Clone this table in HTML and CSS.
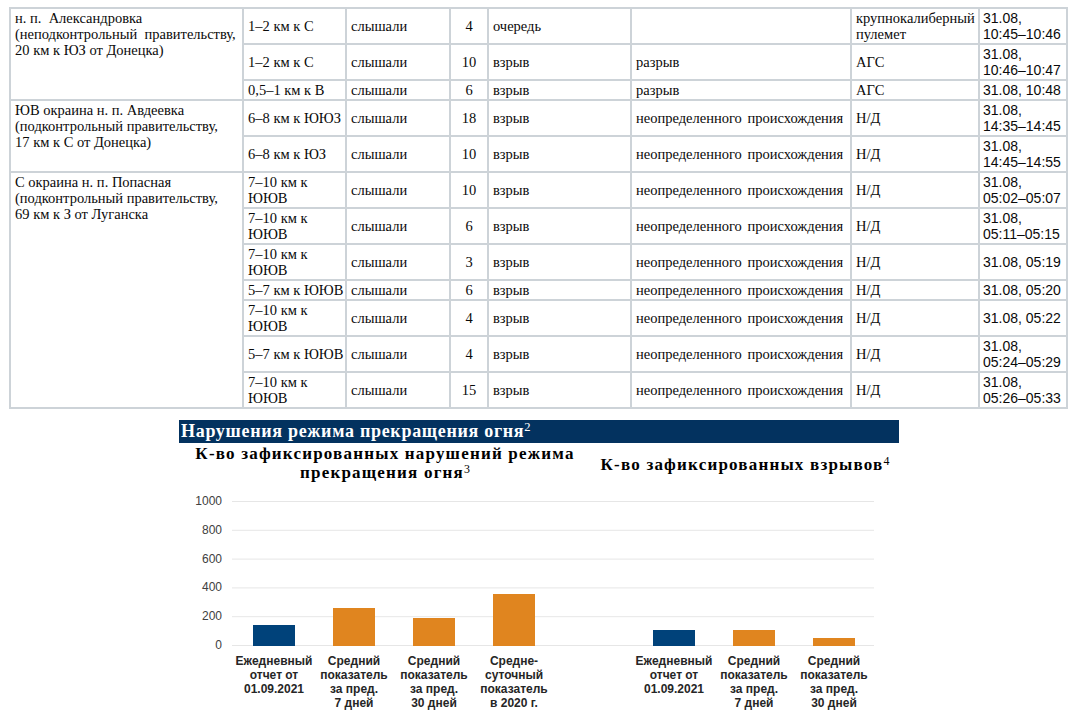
FILE: index.html
```html
<!DOCTYPE html>
<html lang="ru">
<head>
<meta charset="utf-8">
<title>Отчет</title>
<link rel="stylesheet" href="styles.css">
</head>
<body>
<table class="log">
  <colgroup>
    <col class="c1"><col class="c2"><col class="c3"><col class="c4"><col class="c5"><col class="c6"><col class="c7"><col class="c8">
  </colgroup>
  <tbody>
    <tr>
      <td class="place" rowspan="3">н. п. &nbsp;Александровка<br>(неподконтрольный &nbsp;правительству,<br>20 км к ЮЗ от Донецка)</td>
      <td class="dist">1–2 км к С</td><td>слышали</td><td class="num">4</td><td>очередь</td><td></td><td>крупнокалиберный пулемет</td><td class="date">31.08,<br>10:45–10:46</td>
    </tr>
    <tr>
      <td class="dist">1–2 км к С</td><td>слышали</td><td class="num">10</td><td>взрыв</td><td>разрыв</td><td>АГС</td><td class="date">31.08,<br>10:46–10:47</td>
    </tr>
    <tr>
      <td class="dist">0,5–1 км к В</td><td>слышали</td><td class="num">6</td><td>взрыв</td><td>разрыв</td><td>АГС</td><td class="date">31.08, 10:48</td>
    </tr>
    <tr>
      <td class="place" rowspan="2">ЮВ окраина н. п. Авдеевка<br>(подконтрольный правительству,<br>17 км к С от Донецка)</td>
      <td class="dist">6–8 км к ЮЮЗ</td><td>слышали</td><td class="num">18</td><td>взрыв</td><td class="kind">неопределенного происхождения</td><td>Н/Д</td><td class="date">31.08,<br>14:35–14:45</td>
    </tr>
    <tr>
      <td class="dist">6–8 км к ЮЗ</td><td>слышали</td><td class="num">10</td><td>взрыв</td><td class="kind">неопределенного происхождения</td><td>Н/Д</td><td class="date">31.08,<br>14:45–14:55</td>
    </tr>
    <tr>
      <td class="place" rowspan="7">С окраина н. п. Попасная<br>(подконтрольный правительству,<br>69 км к З от Луганска</td>
      <td class="dist">7–10 км к<br>ЮЮВ</td><td>слышали</td><td class="num">10</td><td>взрыв</td><td class="kind">неопределенного происхождения</td><td>Н/Д</td><td class="date">31.08,<br>05:02–05:07</td>
    </tr>
    <tr>
      <td class="dist">7–10 км к<br>ЮЮВ</td><td>слышали</td><td class="num">6</td><td>взрыв</td><td class="kind">неопределенного происхождения</td><td>Н/Д</td><td class="date">31.08,<br>05:11–05:15</td>
    </tr>
    <tr>
      <td class="dist">7–10 км к<br>ЮЮВ</td><td>слышали</td><td class="num">3</td><td>взрыв</td><td class="kind">неопределенного происхождения</td><td>Н/Д</td><td class="date">31.08, 05:19</td>
    </tr>
    <tr>
      <td class="dist">5–7 км к ЮЮВ</td><td>слышали</td><td class="num">6</td><td>взрыв</td><td class="kind">неопределенного происхождения</td><td>Н/Д</td><td class="date">31.08, 05:20</td>
    </tr>
    <tr>
      <td class="dist">7–10 км к<br>ЮЮВ</td><td>слышали</td><td class="num">4</td><td>взрыв</td><td class="kind">неопределенного происхождения</td><td>Н/Д</td><td class="date">31.08, 05:22</td>
    </tr>
    <tr>
      <td class="dist">5–7 км к ЮЮВ</td><td>слышали</td><td class="num">4</td><td>взрыв</td><td class="kind">неопределенного происхождения</td><td>Н/Д</td><td class="date">31.08,<br>05:24–05:29</td>
    </tr>
    <tr>
      <td class="dist">7–10 км к<br>ЮЮВ</td><td>слышали</td><td class="num">15</td><td>взрыв</td><td class="kind">неопределенного происхождения</td><td>Н/Д</td><td class="date">31.08,<br>05:26–05:33</td>
    </tr>
  </tbody>
</table>

<section class="cease">
  <div class="banner">Нарушения режима прекращения огня<sup>2</sup></div>
  <div class="titles">
    <div class="title t1"><span>К-во зафиксированных нарушений режима<br>прекращения огня<sup>3</sup></span></div>
    <div class="title t2"><span>К-во зафиксированных взрывов<sup>4</sup></span></div>
  </div>
  <div class="chart">
    <div class="yaxis">
      <span>1000</span><span>800</span><span>600</span><span>400</span><span>200</span><span>0</span>
    </div>
    <div class="plotwrap">
      <div class="plot">
        <div class="bar blue" style="height:21px"></div>
        <div class="bar orange" style="height:38px"></div>
        <div class="bar orange" style="height:28px"></div>
        <div class="bar orange" style="height:52px"></div>
        <div class="slot-gap"></div>
        <div class="bar blue" style="height:16px"></div>
        <div class="bar orange" style="height:16px"></div>
        <div class="bar orange" style="height:8px"></div>
      </div>
      <div class="labels">
        <div class="lbl">Ежедневный<br>отчет от<br>01.09.2021</div>
        <div class="lbl">Средний<br>показатель<br>за пред.<br>7 дней</div>
        <div class="lbl">Средний<br>показатель<br>за пред.<br>30 дней</div>
        <div class="lbl">Средне-<br>суточный<br>показатель<br>в 2020 г.</div>
        <div class="lbl"></div>
        <div class="lbl">Ежедневный<br>отчет от<br>01.09.2021</div>
        <div class="lbl">Средний<br>показатель<br>за пред.<br>7 дней</div>
        <div class="lbl">Средний<br>показатель<br>за пред.<br>30 дней</div>
      </div>
    </div>
  </div>
</section>
</body>
</html>
```

FILE: styles.css
```css
* { box-sizing: border-box; }

body {
  margin: 0;
  background: #ffffff;
  color: #000000;
}

/* ---------- table ---------- */
.log {
  border-collapse: collapse;
  table-layout: fixed;
  width: 1059px;
  margin: 7px 0 0 9px;
  font: 14.5px/16px "Liberation Serif", "Times New Roman", serif;
  color: #0a0a0a;
}

.c1 { width: 233px; }
.c2 { width: 103px; }
.c3 { width: 104px; }
.c4 { width: 38px; }
.c5 { width: 143px; }
.c6 { width: 220px; }
.c7 { width: 128px; }
.c8 { width: 88px; }

.log td {
  border: 2px solid #cdd3d8;
  padding: 1px 4px;
  vertical-align: middle;
  white-space: nowrap;
}

.log td.place { vertical-align: top; }
.log td.num { text-align: center; }
.log td.kind { word-spacing: 2px; }
.log td.c7w { white-space: normal; }
.log td.date {
  font-family: "Liberation Sans", Arial, sans-serif;
  font-size: 14px;
  padding-left: 3px;
}
.log tr:first-child td:nth-child(7) { white-space: normal; }

/* ---------- ceasefire section ---------- */
.cease {
  width: 720px;
  margin: 11px 0 0 179px;
}

.banner {
  height: 23px;
  background: #03325f;
  color: #ffffff;
  font: bold 18px/23px "Liberation Serif", "Times New Roman", serif;
  letter-spacing: 0.7px;
  padding-left: 2px;
  white-space: nowrap;
}

.banner sup,
.title sup {
  font-size: 0.7em;
  font-weight: normal;
  letter-spacing: 0;
  line-height: 0;
  vertical-align: 0.45em;
}

.titles {
  display: flex;
  margin-top: 1px;
}

.title {
  height: 38px;
  display: flex;
  align-items: center;
  justify-content: center;
  text-align: center;
  font: bold 17px/19px "Liberation Serif", "Times New Roman", serif;
  letter-spacing: 1.2px;
  color: #000;
  white-space: nowrap;
}

.t1 { width: 412px; }
.t2 { width: 308px; padding-top: 3px; }

/* ---------- chart ---------- */
.chart {
  display: flex;
  margin-top: 12px;
}

.yaxis {
  width: 43px;
  height: 158px;
  display: flex;
  flex-direction: column;
  justify-content: space-between;
  align-items: flex-end;
  font: 12px/14px "Liberation Sans", Arial, sans-serif;
  color: #404040;
}

.plotwrap {
  margin-left: 10px;
  padding-top: 7px;
}

.plot {
  width: 642px;
  height: 145px;
  padding-left: 2px;
  display: grid;
  grid-template-columns: repeat(8, 80px);
  align-items: end;
  justify-items: center;
  background-image: linear-gradient(to bottom, #e6e6e6 0, #e6e6e6 1px, transparent 1px);
  background-size: 100% 28.8px;
  background-repeat: repeat-y;
}

.bar { width: 42px; }
.blue { background: #00427a; }
.orange { background: #e0851f; }

.labels {
  margin-top: 8px;
  padding-left: 2px;
  display: grid;
  grid-template-columns: repeat(8, 80px);
  justify-items: center;
}

.lbl {
  text-align: center;
  white-space: nowrap;
  font: bold 12px/14px "Liberation Sans", Arial, sans-serif;
  color: #262626;
}
```
